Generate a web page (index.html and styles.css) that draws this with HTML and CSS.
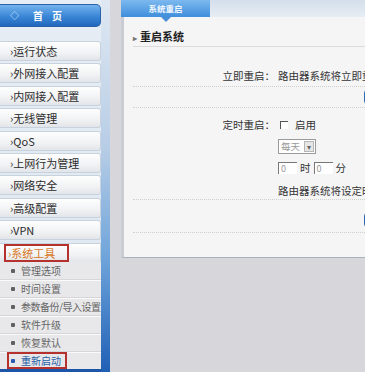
FILE: index.html
```html
<!DOCTYPE html>
<html lang="zh-cn">
<head>
  <meta charset="UTF-8">
  <title>系统重启</title>
  <link rel="stylesheet" href="styles.css">
</head>
<body>

<!-- 左侧菜单 -->
<div class="sidebar">
  <div class="menu">
    <div class="home-btn"><span class="home-icon">&#9671;</span><span>首&nbsp;&nbsp;&nbsp;&nbsp;页</span></div>
    <div class="menu-item">&rsaquo;运行状态</div>
    <div class="menu-item">&rsaquo;外网接入配置</div>
    <div class="menu-item">&rsaquo;内网接入配置</div>
    <div class="menu-item">&rsaquo;无线管理</div>
    <div class="menu-item">&rsaquo;QoS</div>
    <div class="menu-item">&rsaquo;上网行为管理</div>
    <div class="menu-item">&rsaquo;网络安全</div>
    <div class="menu-item">&rsaquo;高级配置</div>
    <div class="menu-item">&rsaquo;VPN</div>
    <div class="menu-item open"><span class="mark">&rsaquo;系统工具</span></div>
    <ul class="sub-menu">
      <li>管理选项</li>
      <li>时间设置</li>
      <li class="long">参数备份/导入设置</li>
      <li>软件升级</li>
      <li>恢复默认</li>
      <li class="current"><span class="mark">重新启动</span></li>
    </ul>
  </div>
  <div class="strip"></div>
</div>

<!-- 内容区 -->
<div class="main">
  <div class="tab-bar">
    <div class="tab">系统重启</div>
  </div>
  <div class="panel">
    <div class="panel-title"><span class="arrow">&#9656;</span>重启系统</div>
    <div class="row first">
      <div class="label">立即重启：</div>
      <div class="value">路由器系统将立即重新启动</div>
    </div>
    <div class="row btn-row"><div></div><div class="value"><span class="blue-btn"></span></div></div>
    <div class="row timer">
      <div class="label">定时重启：</div>
      <div class="value">
        <div class="line"><span class="check"></span> 启用</div>
        <div class="line"><span class="select">每天<span class="drop">&#9662;</span></span></div>
        <div class="line"><span class="num">0</span> 时 <span class="num">0</span> 分</div>
        <div class="line">路由器系统将设定时间重新启动</div>
      </div>
    </div>
    <div class="row btn-row tall"><div></div><div class="value"><span class="blue-btn"></span></div></div>
  </div>
</div>

</body>
</html>
```

FILE: styles.css
```css
body {
  margin: 0;
  width: 365px;
  height: 372px;
  overflow: hidden;
  background: #d7d6db;
  font-family: "Noto Sans CJK SC", "Liberation Sans", sans-serif;
  display: flex;
  align-items: flex-start;
}
.sidebar {
  display: flex;
  width: 110px;
  height: 372px;
  background: linear-gradient(#e6edf5, #dde6ef);
}
.menu {
  width: 101px;
  padding-top: 4px;
  display: flex;
  flex-direction: column;
}
.menu > * {
  flex-shrink: 0;
}
.strip {
  width: 9px;
  background: linear-gradient(#dfe8f2 0%, #b7cde6 40%, #6da3da 70%, #1f5fb5 100%);
}
.home-btn {
  height: 21px;
  margin-bottom: 14px;
  background: linear-gradient(#74b3ee, #3a86d6 55%, #2168bd);
  border: 1px solid #2a62a8;
  border-left: none;
  border-radius: 0 5px 5px 0;
  color: #fff;
  font-size: 10px;
  font-weight: bold;
  display: flex;
  align-items: center;
  gap: 14px;
  padding-left: 10px;
}
.home-icon {
  font-size: 9px;
  color: #cfe4fa;
}
.menu-item {
  height: 20px;
  margin-bottom: 2.4px;
  background: linear-gradient(#fefefe, #f1f2f4 60%, #e2e5e9);
  border: 1px solid #c8d2dd;
  border-left: none;
  border-radius: 0 3px 3px 0;
  font-size: 11px;
  color: #2b2b2b;
  line-height: 18px;
  padding-left: 10px;
  box-sizing: border-box;
}
.menu-item.open {
  padding-left: 4px;
  height: 19px;
  line-height: 14px;
  margin-bottom: 0;
  border-radius: 0;
  border-bottom: none;
}
.menu-item.open .mark {
  display: inline-block;
  border: 2px solid #b5312e;
  padding: 0 12px 0 2px;
  color: #d9781f;
}
.sub-menu {
  list-style: none;
  margin: 0;
  padding: 0;
  background: #e8e8ea;
  border-bottom: 7px solid #1d56a8;
  flex: 1 1 auto;
}
.sub-menu li {
  height: 17px;
  line-height: 17px;
  font-size: 10px;
  color: #666;
  white-space: nowrap;
  border-bottom: 1px solid #d6d6d9;
  box-shadow: 0 1px 0 #fafafa;
  position: relative;
  padding-left: 21px;
}
.sub-menu li.long {
  letter-spacing: -0.5px;
}
.sub-menu li::before {
  content: "";
  position: absolute;
  left: 11px;
  top: 7px;
  width: 4px;
  height: 4px;
  background: #606060;
  border-radius: 1px;
}
.sub-menu li.current {
  border-bottom: none;
  box-shadow: none;
  padding-left: 7px;
}
.sub-menu li.current::before {
  left: 11px;
  background: #2a58b0;
}
.sub-menu li.current .mark {
  display: inline-block;
  border: 2px solid #b5312e;
  line-height: 13px;
  padding: 0 4px 0 12px;
  color: #1e5ea6;
}
.main {
  margin-left: 11px;
  flex: 1;
  display: flex;
  flex-direction: column;
  overflow: hidden;
}
.tab-bar {
  height: 17px;
  background: linear-gradient(#d4dfeb, #e6edf4);
  display: flex;
}
.tab {
  width: 89px;
  background: linear-gradient(#7cb9ef, #3f8ddc);
  color: #eef6ff;
  font-size: 8.5px;
  font-weight: bold;
  text-align: center;
  line-height: 17px;
  position: relative;
}
.tab::after {
  content: "";
  position: absolute;
  left: 40px;
  top: 17px;
  border: 5px solid transparent;
  border-top-color: #4a8fd6;
}
.panel {
  height: 240px;
  background: #f5f5f6;
  border-left: 3px solid #c9ccd2;
  border-bottom: 1px solid #a9b1bd;
  padding-left: 9px;
}
.panel-title {
  height: 29px;
  line-height: 38px;
  font-size: 11px;
  font-weight: bold;
  color: #222;
  border-bottom: 1px solid #dcdcdc;
}
.arrow {
  font-size: 8px;
  color: #777;
  margin-right: 3px;
}
.row {
  display: grid;
  grid-template-columns: 142px 1fr;
  font-size: 10.5px;
  color: #333;
  border-bottom: 1px dotted #cfcfcf;
  white-space: nowrap;
}
.label {
  text-align: right;
}
.value {
  padding-left: 3px;
}
.row.first {
  height: 40px;
  align-items: end;
  padding-bottom: 3px;
  box-sizing: border-box;
}
.btn-row {
  height: 20px;
  align-items: center;
}
.btn-row.tall {
  height: 33px;
  padding-top: 8px;
  box-sizing: border-box;
}
.btn-row .value {
  padding-left: 89px;
}
.blue-btn {
  display: block;
  width: 40px;
  height: 14px;
  border-radius: 4px;
  background: linear-gradient(#9ccaf2, #3b85d4 50%, #2a72c2);
  border: 1px solid #2d6cb4;
}
.timer {
  padding-top: 9px;
  height: 92px;
  box-sizing: border-box;
}
.line {
  height: 21px;
  display: flex;
  align-items: center;
  gap: 3px;
}
.timer .label {
  line-height: 15px;
}
.timer .line:first-child {
  height: 15px;
  margin-bottom: 4px;
  padding-left: 2px;
}
.timer .line:last-child {
  height: 25px;
}
.check {
  width: 7px;
  height: 7px;
  border-left: 1px solid #555;
  border-top: 1px solid #555;
  background: #fff;
  margin-right: 4px;
}
.select {
  width: 34px;
  height: 13px;
  border: 1px solid #9a9a9a;
  background: #fff;
  color: #999;
  font-size: 9.5px;
  line-height: 13px;
  display: flex;
  justify-content: space-between;
  padding-left: 2px;
  box-sizing: content-box;
}
.drop {
  width: 10px;
  height: 11px;
  margin: 1px;
  background: #e6e6e6;
  border: 1px solid #b5b5b5;
  box-sizing: border-box;
  font-size: 8px;
  line-height: 9px;
  text-align: center;
  color: #666;
}
.num {
  width: 16px;
  height: 11px;
  border-left: 1px solid #777;
  border-top: 1px solid #777;
  background: #fff;
  font-size: 9px;
  color: #999;
  line-height: 11px;
  padding-left: 2px;
}
```
